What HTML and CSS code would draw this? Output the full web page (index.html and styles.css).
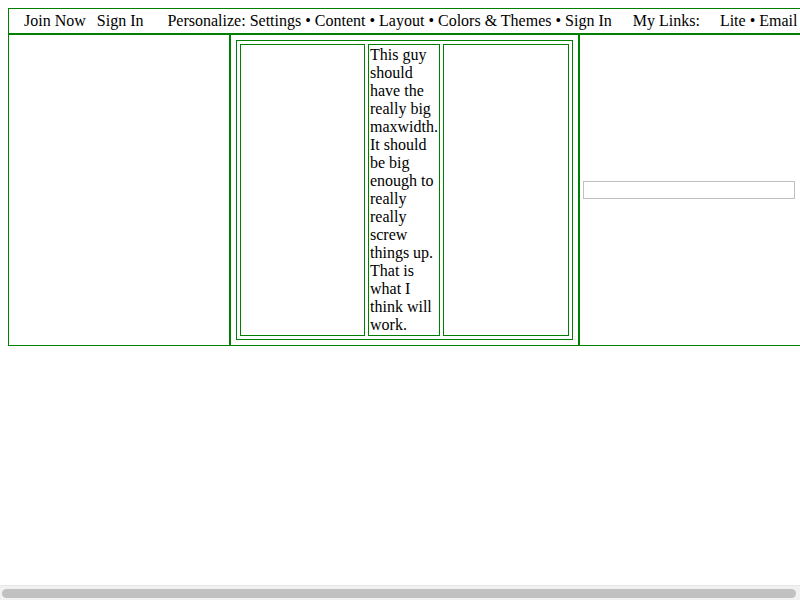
FILE: index.html
```html
<!DOCTYPE html>
<html>
<head>
<meta charset="utf-8">
<title>Layout</title>
<link rel="stylesheet" href="styles.css">
</head>
<body>
<div class="page">
  <div class="header">
    <span class="join">Join Now</span>
    <span class="signin">Sign In</span>
    <span class="personalize">Personalize: Settings • Content • Layout • Colors &amp; Themes • Sign In</span>
    <span class="mylinks">My Links:</span>
    <span class="lite">Lite • Email</span>
  </div>
  <div class="main">
    <div class="left"></div>
    <div class="center">
      <div class="inner">
        <div class="cell cell-left"></div>
        <div class="cell cell-mid">This guy should have the really big maxwidth. It should be big enough to really really screw things up. That is what I think will work.</div>
        <div class="cell cell-right"></div>
      </div>
    </div>
    <div class="right">
      <div class="box"></div>
    </div>
  </div>
</div>
<div class="scrollbar"><div class="thumb"></div></div>
</body>
</html>
```
FILE: styles.css
```css
html {
  background: #ffffff;
  overflow: hidden;
}
body {
  margin: 8px 0 8px 8px;
  font-family: "Liberation Serif", "Times New Roman", serif;
  font-size: 16px;
  line-height: 18px;
  color: #000000;
}
.page {
  box-sizing: border-box;
  width: 793px;
  border: 1px solid #008000;
}
.header {
  display: flex;
  white-space: nowrap;
  height: 25px;
  box-sizing: border-box;
  padding-top: 3px;
  border-bottom: 1px solid #008000;
}
.join { margin-left: 15px; }
.signin { margin-left: 11px; }
.personalize { margin-left: 24px; }
.mylinks { margin-left: 21px; }
.lite { margin-left: 20px; }
.main {
  display: flex;
  height: 311px;
  box-sizing: border-box;
  border-top: 1px solid #008000;
}
.left {
  box-sizing: border-box;
  width: 221px;
  border-right: 1px solid #008000;
}
.center {
  box-sizing: border-box;
  width: 349px;
  padding: 5px;
  border-left: 1px solid #008000;
  border-right: 1px solid #008000;
}
.inner {
  box-sizing: border-box;
  height: 300px;
  display: flex;
  gap: 3px;
  padding: 3px;
  border: 1px solid #008000;
}
.cell {
  box-sizing: border-box;
  border: 1px solid #008000;
}
.cell-left { width: 125px; }
.cell-mid {
  width: 72px;
  padding: 1px;
}
.cell-right { flex: 1; }
.right {
  flex: 1;
  display: flex;
  align-items: center;
  padding-left: 3px;
  border-left: 1px solid #008000;
}
.box {
  box-sizing: border-box;
  width: 212px;
  height: 18px;
  margin-top: -1px;
  border: 1px solid #c0c0c0;
}
.scrollbar {
  position: fixed;
  left: 0;
  right: 0;
  bottom: 0;
  height: 15px;
  box-sizing: border-box;
  padding: 3px 4px 2px 2px;
  background: #f1f1f1;
  border-top: 1px solid #e6e6e6;
}
.thumb {
  height: 9px;
  border-radius: 5px;
  background: #c1c1c1;
}
```
